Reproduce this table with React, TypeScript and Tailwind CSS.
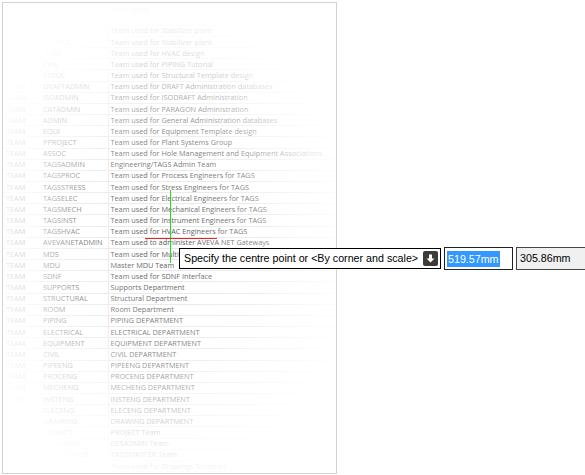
const rows: [string, string, string][] = [
  ['', '', ''],
  ['TEAM', 'STABLE', 'Team used for Stabilizer plant'],
  ['TEAM', 'SAMPLE', 'Team used for Stabilizer plant'],
  ['TEAM', 'HVAC', 'Team used for HVAC design'],
  ['TEAM', 'PIPE', 'Team used for PIPING Tutorial'],
  ['TEAM', 'STRUC', 'Team used for Structural Template design'],
  ['TEAM', 'DRAFTADMIN', 'Team used for DRAFT Administration databases'],
  ['TEAM', 'ISOADMIN', 'Team used for ISODRAFT Administration'],
  ['TEAM', 'CATADMIN', 'Team used for PARAGON Administration'],
  ['TEAM', 'ADMIN', 'Team used for General Administration databases'],
  ['TEAM', 'EQUI', 'Team used for Equipment Template design'],
  ['TEAM', 'PPROJECT', 'Team used for Plant Systems Group'],
  ['TEAM', 'ASSOC', 'Team used for Hole Management and Equipment Associations'],
  ['TEAM', 'TAGSADMIN', 'Engineering/TAGS Admin Team'],
  ['TEAM', 'TAGSPROC', 'Team used for Process Engineers for TAGS'],
  ['TEAM', 'TAGSSTRESS', 'Team used for Stress Engineers for TAGS'],
  ['TEAM', 'TAGSELEC', 'Team used for Electrical Engineers for TAGS'],
  ['TEAM', 'TAGSMECH', 'Team used for Mechanical Engineers for TAGS'],
  ['TEAM', 'TAGSINST', 'Team used for Instrument Engineers for TAGS'],
  ['TEAM', 'TAGSHVAC', 'Team used for HVAC Engineers for TAGS'],
  ['TEAM', 'AVEVANETADMIN', 'Team used to administer AVEVA NET Gateways'],
  ['TEAM', 'MDS', 'Team used for Multi Discipline Supports'],
  ['TEAM', 'MDU', 'Master MDU Team'],
  ['TEAM', 'SDNF', 'Team used for SDNF Interface'],
  ['TEAM', 'SUPPORTS', 'Supports Department'],
  ['TEAM', 'STRUCTURAL', 'Structural Department'],
  ['TEAM', 'ROOM', 'Room Department'],
  ['TEAM', 'PIPING', 'PIPING DEPARTMENT'],
  ['TEAM', 'ELECTRICAL', 'ELECTRICAL DEPARTMENT'],
  ['TEAM', 'EQUIPMENT', 'EQUIPMENT DEPARTMENT'],
  ['TEAM', 'CIVIL', 'CIVIL DEPARTMENT'],
  ['TEAM', 'PIPEENG', 'PIPEENG DEPARTMENT'],
  ['TEAM', 'PROCENG', 'PROCENG DEPARTMENT'],
  ['TEAM', 'MECHENG', 'MECHENG DEPARTMENT'],
  ['TEAM', 'INSTENG', 'INSTENG DEPARTMENT'],
  ['TEAM', 'ELECENG', 'ELECENG DEPARTMENT'],
  ['TEAM', 'DRAWING', 'DRAWING DEPARTMENT'],
  ['TEAM', 'PROJECT', 'PROJECT Team'],
  ['TEAM', 'DESADMIN', 'DESADMIN Team'],
  ['TEAM', 'TAGSMASTER', 'TAGSMASTER Team'],
  ['TEAM', 'DRAWINGS', 'Team used for Drawings Template'],
];

function Row({ cells, header }: { cells: [string, string, string]; header?: boolean }) {
  return (
    <div className={`flex h-[11.17px] items-center shrink-0 ${header ? '' : 'border-b border-[#e6e6e6]'}`}>
      <div className="w-[40px] pl-[3px] whitespace-nowrap">{cells[0]}</div>
      <div className="w-[65px] whitespace-nowrap">{cells[1]}</div>
      <div className="h-full border-l border-[#e6e6e6] pl-[1.5px] whitespace-nowrap flex items-center">{cells[2]}</div>
    </div>
  );
}

function DownArrow() {
  return (
    <div className="w-[15px] h-[15px] rounded-[2px] bg-[#3c3c3c] flex items-center justify-center">
      <svg width="11" height="11" viewBox="0 0 11 11">
        <path d="M4 1.5h3v4h2.5L5.5 9.5 1.5 5.5H4z" fill="#fff" />
      </svg>
    </div>
  );
}

export default function App() {
  return (
    <div className="w-[585px] h-[475px] bg-white relative overflow-hidden">
      <div className="absolute left-[2px] top-[2px] w-[335px] h-[472px] border border-[#d2d2d2] bg-white overflow-hidden">
        <div
          className="flex flex-col text-[7.3px] text-[#555] pt-[0.5px]"
          style={{ fontFamily: '"Open Sans", "Noto Sans", sans-serif' }}
        >
          <Row cells={['Type', 'Name', 'Description']} header />
          {rows.map((r, i) => (
            <Row key={i} cells={r} />
          ))}
        </div>
        <div className="absolute inset-0 bg-[radial-gradient(ellipse_200px_250px_at_165px_240px,rgba(255,255,255,0)_0%,rgba(255,255,255,0.3)_45%,rgba(255,255,255,0.82)_78%,#fff_100%)]" />
      </div>

      {/* cursor */}
      <div className="absolute left-[170px] top-[190px] w-px h-[73px] bg-[#22dd22]" />
      <div className="absolute left-[145px] top-[238px] w-[72px] h-px bg-[#ee2222]" />

      {/* prompt */}
      <div
        className="absolute left-[179px] top-[247px] flex items-center gap-[3px] text-[10.7px] text-black"
        style={{ fontFamily: '"Liberation Sans", Arial, sans-serif' }}
      >
        <div className="h-[21px] w-[262px] border border-black bg-white flex items-center pl-[4px] gap-[5px]">
          <span className="whitespace-nowrap">Specify the centre point or &lt;By corner and scale&gt;</span>
          <DownArrow />
        </div>
        <div className="h-[23px] w-[69px] border border-[#222] bg-white flex items-center pl-[2px]">
          <span className="bg-[#3399ff] text-white px-[1px] leading-[16px]">519.57mm</span>
        </div>
        <div className="h-[23px] w-[71px] border border-[#444] bg-[#f0f0f0] flex items-center pl-[3px]">
          <span>305.86mm</span>
        </div>
      </div>
    </div>
  );
}
